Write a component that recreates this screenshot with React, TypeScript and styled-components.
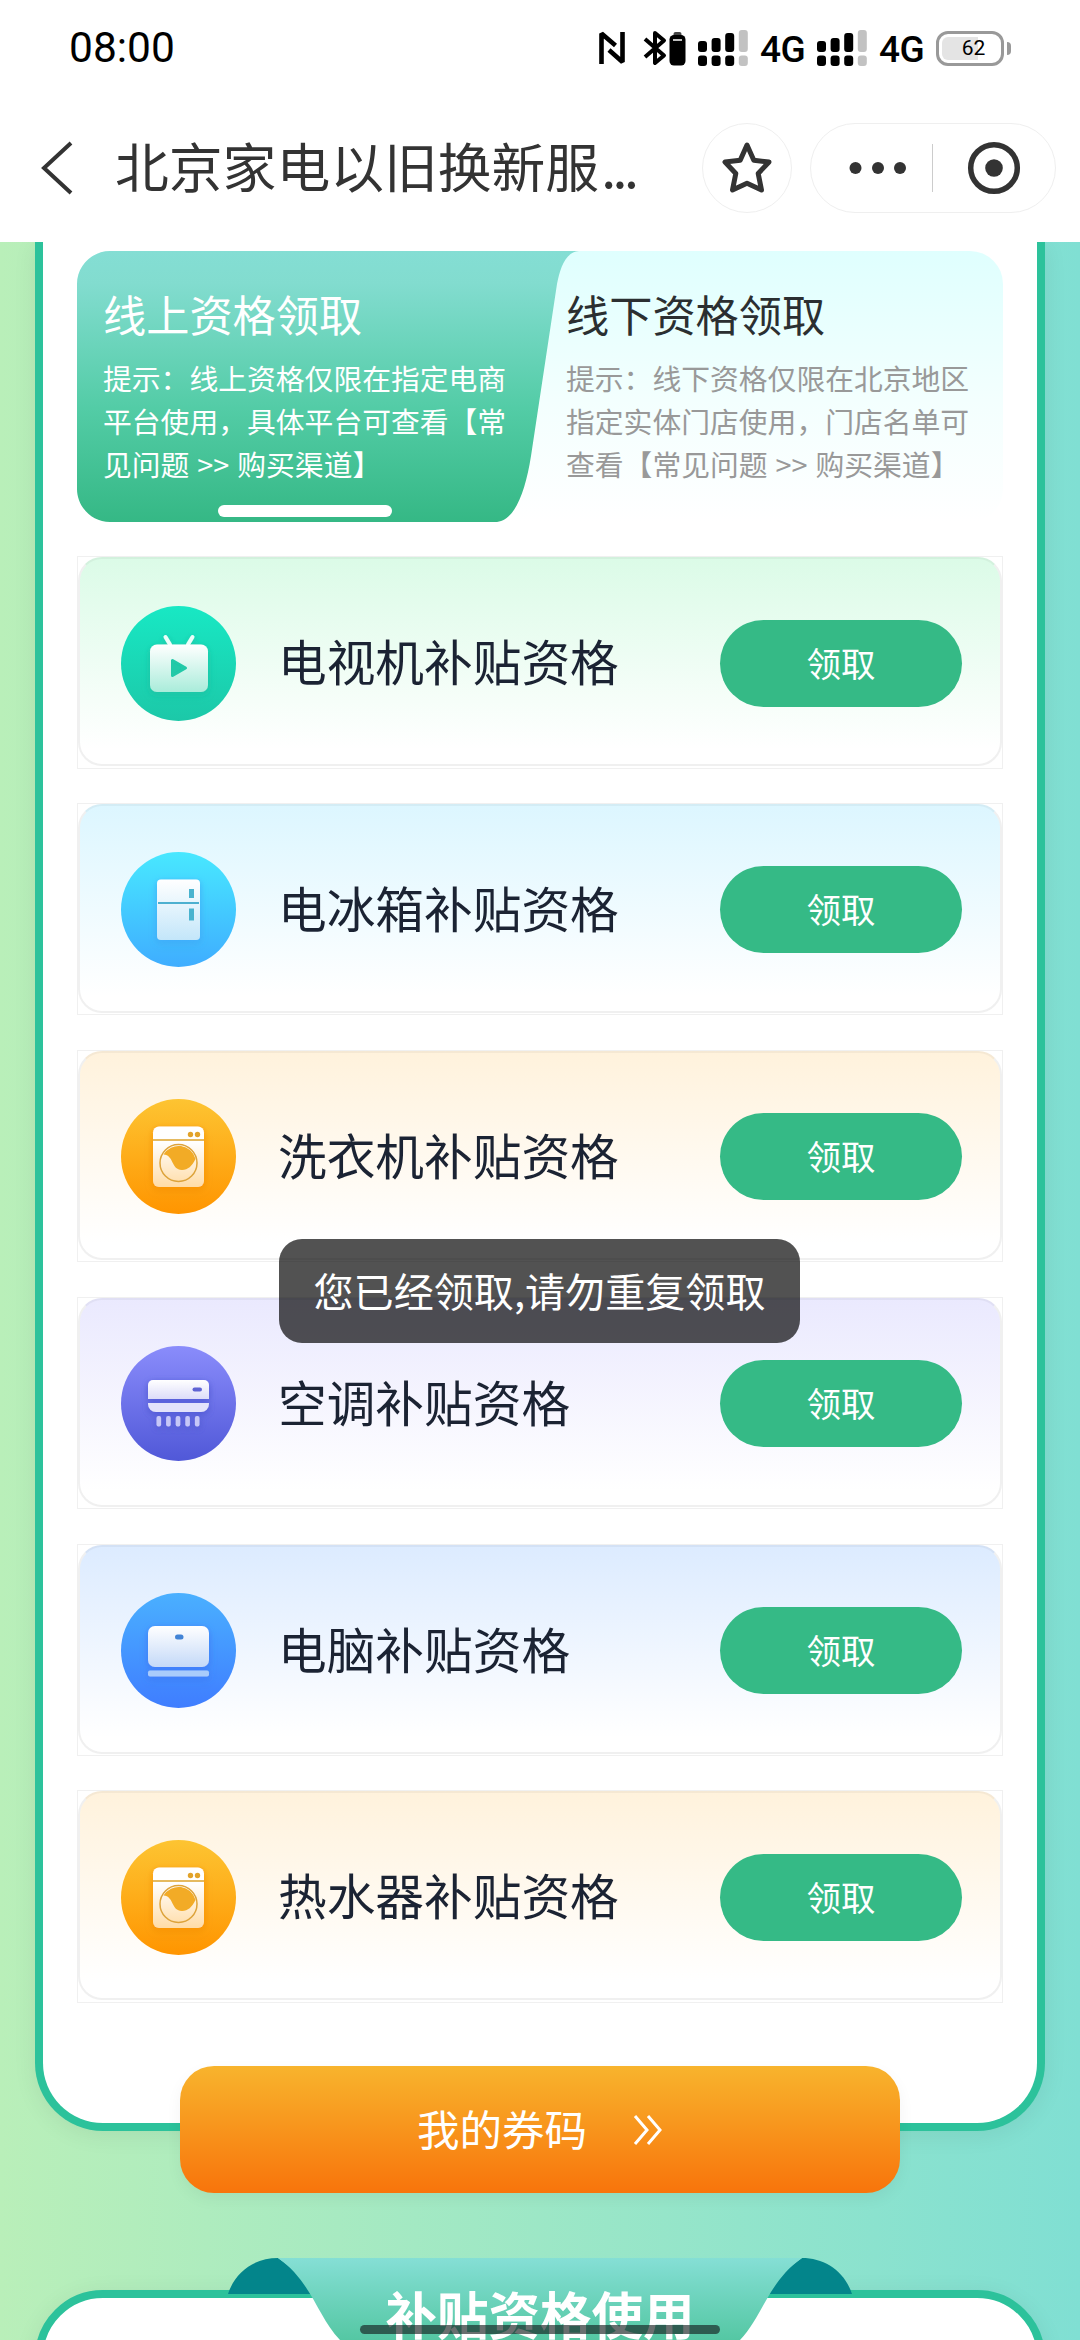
import React from "react";
import styled, { createGlobalStyle } from "styled-components";

const GlobalStyle = createGlobalStyle`
  * { box-sizing: border-box; }
  body {
    margin: 0;
    font-family: "Noto Sans CJK SC", "Noto Sans", sans-serif;
    text-spacing-trim: space-all;
  }
`;

const Screen = styled.div`
  position: relative;
  width: 1080px;
  height: 2340px;
  overflow: hidden;
  background: linear-gradient(90deg, #b9efb9 0%, #80dfd3 100%);
`;

/* ---------- header ---------- */

const Header = styled.header`
  position: relative;
  z-index: 2;
  height: 242px;
  background: #fff;
`;

const StatusBar = styled.div`
  display: flex;
  align-items: center;
  height: 96px;
  padding: 0 76px 0 69px;
  font-family: Roboto, sans-serif;
  color: #000;
`;

const Clock = styled.div`
  flex: 1;
  font-size: 42.5px;
  line-height: 96px;
`;

const StatusIcons = styled.div`
  display: flex;
  align-items: center;
  svg { display: block; }
`;

const Network = styled.span`
  width: 46px;
  margin: 4px 11px 0 12px;
  font-size: 37px;
  line-height: 40px;
  letter-spacing: -0.5px;
  font-weight: 500;
`;

const Battery = styled.div`
  position: relative;
  display: flex;
  align-items: center;
  justify-content: center;
  width: 68px;
  height: 35px;
  padding-left: 7px;
  border: 3px solid #999;
  border-radius: 12px;
  font-size: 21px;
  line-height: 29px;
  &::before {
    content: "";
    position: absolute;
    left: 3px;
    top: 3px;
    width: 36px;
    height: 23px;
    border-radius: 6px 0 0 6px;
    background: #e4e4e4;
  }
  &::after {
    content: "";
    position: absolute;
    right: -10px;
    top: 8px;
    width: 4px;
    height: 13px;
    border-radius: 0 4px 4px 0;
    background: #999;
  }
  span { position: relative; }
`;

const NavBar = styled.nav`
  display: flex;
  align-items: center;
  height: 144px;
  padding: 0 24px 0 40px;
  color: #333;
`;

const NavTitle = styled.h1`
  flex: 1;
  margin: 0 0 6px 41px;
  font-size: 53.8px;
  line-height: 80px;
  font-weight: 400;
  white-space: nowrap;
`;

const Ellipsis = styled.span`
  margin-left: 2px;
  letter-spacing: -3.6px;
`;

const RoundButton = styled.div`
  display: flex;
  align-items: center;
  justify-content: center;
  width: 90px;
  height: 90px;
  border: 1.5px solid #efefef;
  border-radius: 50%;
`;

const Capsule = styled.div`
  display: flex;
  align-items: center;
  width: 246px;
  height: 90px;
  margin-left: 18px;
  padding: 0 34px 0 38px;
  border: 1.5px solid #efefef;
  border-radius: 45px;
`;

const Divider = styled.i`
  width: 1px;
  height: 48px;
  margin: 0 34px 0 25px;
  background: #ccc;
`;

/* ---------- cards ---------- */

const Card = styled.section`
  width: 1010px;
  margin: 0 auto;
  border: 8px solid #2cc29b;
  background: #fff;
  box-shadow: 0 4px 24px rgba(0, 0, 0, 0.07);
`;

const ClaimCard = styled(Card)`
  height: 1889px;
  padding: 9px 34px 0;
  border-top: 0;
  border-radius: 0 0 68px 68px;
`;

const UsageCard = styled(Card)`
  position: relative;
  height: 400px;
  margin-top: 97px;
  border-radius: 68px;
`;

const Tabs = styled.div`
  position: relative;
  display: grid;
  grid-template-columns: 489px 1fr;
  height: 271px;
  border-radius: 33px;
  background: linear-gradient(180deg, #dffffe 0%, #f3fffe 55%, #fff 100%);
`;

const ActiveShape = styled.div`
  position: absolute;
  inset: 0 auto 0 0;
  width: 502px;
  background: linear-gradient(180deg, #84ded4 0%, #82dccf 12%, #53cca6 58%, #35b885 100%);
  clip-path: path("M33 0H502C488 1 483 18 480 33L454 205C448 243 437 271 418 271H33C15 271 0 256 0 238V33C0 15 15 0 33 0Z");
`;

const Tab = styled.div<{ $active?: boolean }>`
  position: relative;
  padding: 32px 0 0 ${(p) => (p.$active ? "26px" : "0")};
  color: ${(p) => (p.$active ? "#fff" : "#999")};
  h2 {
    margin: 0;
    font-size: 43.2px;
    line-height: 60px;
    font-weight: 400;
    color: ${(p) => (p.$active ? "#fff" : "#2b2f31")};
  }
  p {
    margin: 13px 0 0;
    font-size: 28.8px;
    line-height: 43px;
    word-spacing: 1.5px;
    white-space: pre;
  }
`;

const TabIndicator = styled.i`
  position: absolute;
  left: 141px;
  bottom: 5px;
  width: 174px;
  height: 12px;
  border-radius: 6px;
  background: #fff;
`;

const List = styled.div`
  display: flex;
  flex-direction: column;
  gap: 34.4px;
  margin-top: 34px;
`;

const RowFrame = styled.div`
  height: 212.5px;
  border: 1px solid #f0f0f0;
`;

const Row = styled.div<{ $tint: string }>`
  display: flex;
  align-items: center;
  height: 209px;
  padding: 3px 38px 0 41px;
  border: 2px solid #f0f0f0;
  border-top-color: rgba(0, 0, 0, 0.04);
  border-radius: 24px;
  background: linear-gradient(180deg, ${(p) => p.$tint} 0%, #fff 92%) border-box;
`;

const RowTitle = styled.h3`
  flex: 1;
  margin: 0 0 6px 42px;
  font-size: 48.7px;
  line-height: 72px;
  font-weight: 400;
  color: #1b2333;
`;

const ClaimButton = styled.button`
  width: 242px;
  height: 87px;
  padding: 0;
  border: 0;
  border-radius: 44px;
  background: #35ba86;
  color: #fff;
  font: 400 34.5px/84px "Noto Sans CJK SC", sans-serif;
  padding-bottom: 3px;
`;

const CouponButton = styled.button`
  position: relative;
  display: flex;
  align-items: center;
  justify-content: center;
  gap: 46px;
  width: 720px;
  height: 127px;
  margin: -65px auto 0;
  padding: 0 0 2px;
  border: 0;
  border-radius: 34px;
  background: linear-gradient(180deg, #f8b42d 0%, #f8740b 100%);
  box-shadow: 0 6px 16px rgba(0, 0, 0, 0.05);
  color: #fff;
  font: 400 42.5px/64px "Noto Sans CJK SC", sans-serif;
  span { margin-bottom: 2px; }
  svg { margin-top: 3px; }
`;

const Ribbon = styled.div`
  position: absolute;
  left: 185px;
  top: -40px;
  width: 624px;
  height: 120px;
  svg { display: block; position: absolute; inset: 0; }
`;

const RibbonText = styled.h2`
  position: relative;
  margin: 0;
  padding-top: 15px;
  text-align: center;
  font-size: 51.5px;
  line-height: 80px;
  font-weight: 700;
  color: #fff;
`;

const Toast = styled.div`
  position: absolute;
  z-index: 3;
  left: 279px;
  top: 1239px;
  width: 521px;
  height: 104px;
  border-radius: 23px;
  background: rgba(0, 0, 0, 0.68);
  color: #fff;
  text-align: center;
  font-size: 40.1px;
  line-height: 101px;
  white-space: nowrap;
`;

const HomeBar = styled.div`
  position: absolute;
  z-index: 3;
  left: 360px;
  top: 2325px;
  width: 360px;
  height: 9px;
  border-radius: 5px;
  background: rgba(20, 30, 30, 0.64);
`;

/* ---------- icons ---------- */

const Signal = () => (
  <svg width="50" height="36" viewBox="0 0 50 36">
    {[11, 8, 3, 0].map((top, i) => (
      <g key={i} fill={i === 3 ? "#c2c2c2" : "#000"}>
        <rect x={i * 13.6} y={top} width="9" height={22 - top} rx="3" />
        <rect x={i * 13.6} y="25.5" width="9" height="10.5" rx="3" />
      </g>
    ))}
  </svg>
);

type Kind = "tv" | "fridge" | "washer" | "ac" | "pc";

const discs: Record<Kind, [string, string]> = {
  tv: ["#18e8c4", "#1cc8a8"],
  fridge: ["#48e8ff", "#3fadff"],
  washer: ["#fdc432", "#ff9500"],
  ac: ["#8a8cfb", "#5058d8"],
  pc: ["#4ab0ff", "#3f7dff"],
};

const bodies: Record<Kind, [string, string]> = {
  tv: ["#ffffff", "#a9ecda"],
  fridge: ["#ffffff", "#c3e6fa"],
  washer: ["#ffffff", "#ffdca6"],
  ac: ["#ffffff", "#dcdcf9"],
  pc: ["#ffffff", "#c4d9f8"],
};

const Glyph = ({ kind, fill }: { kind: Kind; fill: string }) => {
  switch (kind) {
    case "tv":
      return (
        <g>
          <path d="M44.500 31L49 38.500M71.500 31L67 38.500" stroke="#eafffa" strokeWidth="4" strokeLinecap="round" />
          <rect x="29" y="38.500" width="58" height="47.500" rx="7" fill={fill} />
          <path d="M51.500 54.500V69.500L64.500 62Z" fill="#20c9a8" stroke="#20c9a8" strokeWidth="3" strokeLinejoin="round" />
        </g>
      );
    case "fridge":
      return (
        <g>
          <rect x="36" y="27.500" width="43" height="60.500" rx="4" fill={fill} />
          <path d="M37 51H78" stroke="#4db0d0" strokeWidth="2" />
          <rect x="68" y="37" width="5" height="9" fill="#4ab3cf" />
          <rect x="68" y="56.500" width="5" height="12" fill="#4ab3cf" />
        </g>
      );
    case "washer":
      return (
        <g>
          <rect x="32" y="27.500" width="51" height="60.500" rx="6" fill={fill} />
          <path d="M32 41H83" stroke="#dda32d" strokeWidth="1.500" />
          <circle cx="69.500" cy="35.500" r="2.700" fill="#e2a32c" />
          <circle cx="76.500" cy="35.500" r="2.700" fill="#e2a32c" />
          <circle cx="57.500" cy="64" r="18.500" fill="none" stroke="#dda33a" strokeWidth="1.500" />
          <path d="M42.500 55.500A17.500 17.500 0 0 1 74.500 60C71 67 67 71 61 71C50 71 53 56 42.500 55.500Z" fill="#f2ab25" />
        </g>
      );
    case "ac":
      return (
        <g>
          <path d="M27 53V39a5 5 0 0 1 5-5H83a5 5 0 0 1 5 5V53Z" fill={fill} />
          <rect x="71.500" y="41.500" width="9.500" height="4" rx="2" fill="#5f63d4" />
          <path d="M27 57H88V58a8 8 0 0 1-8 8H35a8 8 0 0 1-8-8Z" fill="#e3e3fb" />
          {[0, 1, 2, 3, 4].map((i) => (
            <rect key={i} x={35.5 + i * 9.6} y="70" width="4.600" height="10.500" rx="2" fill="#c6c7f8" />
          ))}
        </g>
      );
    case "pc":
      return (
        <g>
          <rect x="27" y="33" width="61" height="41" rx="7" fill={fill} />
          <rect x="54" y="41.500" width="8.500" height="5" rx="2.500" fill="#4284d6" />
          <rect x="27" y="77.500" width="61" height="6" rx="2" fill="#a9cbfb" />
        </g>
      );
  }
};

const ApplianceIcon = ({ kind }: { kind: Kind }) => {
  const id = React.useId().replace(/[^a-zA-Z0-9]/g, "");
  return (
    <svg width="115" height="115" viewBox="0 0 115 115" fill="none">
      <defs>
        <linearGradient id={id + "d"} x2="0" y2="1">
          <stop stopColor={discs[kind][0]} />
          <stop offset="1" stopColor={discs[kind][1]} />
        </linearGradient>
        <linearGradient id={id + "b"} x2="0" y2="1">
          <stop offset={kind === "washer" ? 0.25 : 0} stopColor={bodies[kind][0]} />
          <stop offset="1" stopColor={bodies[kind][1]} />
        </linearGradient>
        <filter id={id + "s"} x="-30%" y="-30%" width="160%" height="160%">
          <feDropShadow dx="0" dy="2" stdDeviation="3" floodColor={discs[kind][1]} floodOpacity="0.9" />
          <feDropShadow dx="0" dy="2" stdDeviation="3" floodColor="#000" floodOpacity="0.1" />
        </filter>
      </defs>
      <circle cx="57.500" cy="57.500" r="57.500" fill={`url(#${id}d)`} />
      <g filter={`url(#${id}s)`}>
        <Glyph kind={kind} fill={`url(#${id}b)`} />
      </g>
    </svg>
  );
};

const items: { kind: Kind; title: string; tint: string }[] = [
  { kind: "tv", title: "电视机补贴资格", tint: "#dbfbe7" },
  { kind: "fridge", title: "电冰箱补贴资格", tint: "#dcf6ff" },
  { kind: "washer", title: "洗衣机补贴资格", tint: "#fff2dc" },
  { kind: "ac", title: "空调补贴资格", tint: "#eae9fe" },
  { kind: "pc", title: "电脑补贴资格", tint: "#dcebff" },
  { kind: "washer", title: "热水器补贴资格", tint: "#fff2dc" },
];

const NfcIcon = () => (
  <svg width="26" height="34" viewBox="0 0 26 34" fill="none" stroke="#000" strokeWidth="4.600">
    <path d="M2.500 33V2.500L16.500 14.500M23.500 1V31L10 19" strokeLinejoin="bevel" />
  </svg>
);

const BluetoothSvg = styled.svg`
  margin: 0 12px 0 18px;
`;

const BluetoothIcon = () => (
  <BluetoothSvg width="43" height="36" viewBox="0 0 43 36" fill="none">
    <path d="M2 9L21 25.500L12 33V3L21 10.500L2 27" stroke="#000" strokeWidth="4" strokeLinejoin="round" />
    <rect x="30.500" y="2" width="8" height="5" rx="2" fill="#444" />
    <rect x="26.500" y="5" width="16" height="30.500" rx="4.500" fill="#000" />
    <path d="M30 10H39" stroke="#fff" strokeWidth="1.500" />
  </BluetoothSvg>
);

export default function App() {
  return (
    <Screen>
      <GlobalStyle />
      <Header>
        <StatusBar>
          <Clock>08:00</Clock>
          <StatusIcons>
            <NfcIcon />
            <BluetoothIcon />
            <Signal />
            <Network>4G</Network>
            <Signal />
            <Network>4G</Network>
            <Battery><span>62</span></Battery>
          </StatusIcons>
        </StatusBar>
        <NavBar>
          <svg width="34" height="54" viewBox="0 0 34 54" fill="none" stroke="#333" strokeWidth="4">
            <path d="M31 2L4 27L31 52" />
          </svg>
          <NavTitle>北京家电以旧换新服<Ellipsis>...</Ellipsis></NavTitle>
          <RoundButton>
            <svg width="52" height="54" viewBox="0 0 52 54" fill="none" stroke="#333" strokeWidth="5" strokeLinejoin="round">
              <path d="M26 4L32.800 19.300L48 21L37.200 32.500L40.500 49L26 42.200L11.500 49L14.800 32.500L4 21L19.200 19.300Z" />
            </svg>
          </RoundButton>
          <Capsule>
            <svg width="58" height="14" viewBox="0 0 58 14" fill="#333">
              <circle cx="6.500" cy="7" r="6" />
              <circle cx="29" cy="7" r="6" />
              <circle cx="51" cy="7" r="6" />
            </svg>
            <Divider />
            <svg width="54" height="54" viewBox="0 0 54 54" fill="none">
              <circle cx="27" cy="27" r="23.300" stroke="#333" strokeWidth="5.500" />
              <circle cx="27" cy="27" r="8.800" fill="#333" />
            </svg>
          </Capsule>
        </NavBar>
      </Header>

      <ClaimCard>
        <Tabs>
          <ActiveShape />
          <Tab $active>
            <h2>线上资格领取</h2>
            <p>{"提示：线上资格仅限在指定电商\n平台使用，具体平台可查看【常\n见问题 >> 购买渠道】"}</p>
            <TabIndicator />
          </Tab>
          <Tab>
            <h2>线下资格领取</h2>
            <p>{"提示：线下资格仅限在北京地区\n指定实体门店使用，门店名单可\n查看【常见问题 >> 购买渠道】"}</p>
          </Tab>
        </Tabs>
        <List>
          {items.map((item) => (
            <RowFrame key={item.title}>
              <Row $tint={item.tint}>
                <ApplianceIcon kind={item.kind} />
                <RowTitle>{item.title}</RowTitle>
                <ClaimButton>领取</ClaimButton>
              </Row>
            </RowFrame>
          ))}
        </List>
      </ClaimCard>

      <CouponButton>
        <span>我的券码</span>
        <svg width="30" height="32" viewBox="0 0 30 32" fill="none" stroke="#fff" strokeWidth="3">
          <path d="M2 2L14 16L2 30M15 2L27 16L15 30" />
        </svg>
      </CouponButton>

      <UsageCard>
        <Ribbon>
          <svg width="624" height="120" viewBox="0 0 624 120">
            <defs>
              <linearGradient id="ribbonFill" x2="0" y2="1">
                <stop stopColor="#85dfd5" />
                <stop offset="1" stopColor="#3ebc8c" />
              </linearGradient>
            </defs>
            <path d="M0 36C8 12 28 0 50 0L100 36ZM624 36C616 12 596 0 574 0L524 36Z" fill="#03858b" />
            <path d="M50 0H574C540 24 535 58 512 82C495 104 480 115 460 120H164C144 115 129 104 112 82C89 58 84 24 50 0Z" fill="url(#ribbonFill)" />
          </svg>
          <RibbonText>补贴资格使用</RibbonText>
        </Ribbon>
      </UsageCard>

      <Toast>您已经领取,请勿重复领取</Toast>
      <HomeBar />
    </Screen>
  );
}
